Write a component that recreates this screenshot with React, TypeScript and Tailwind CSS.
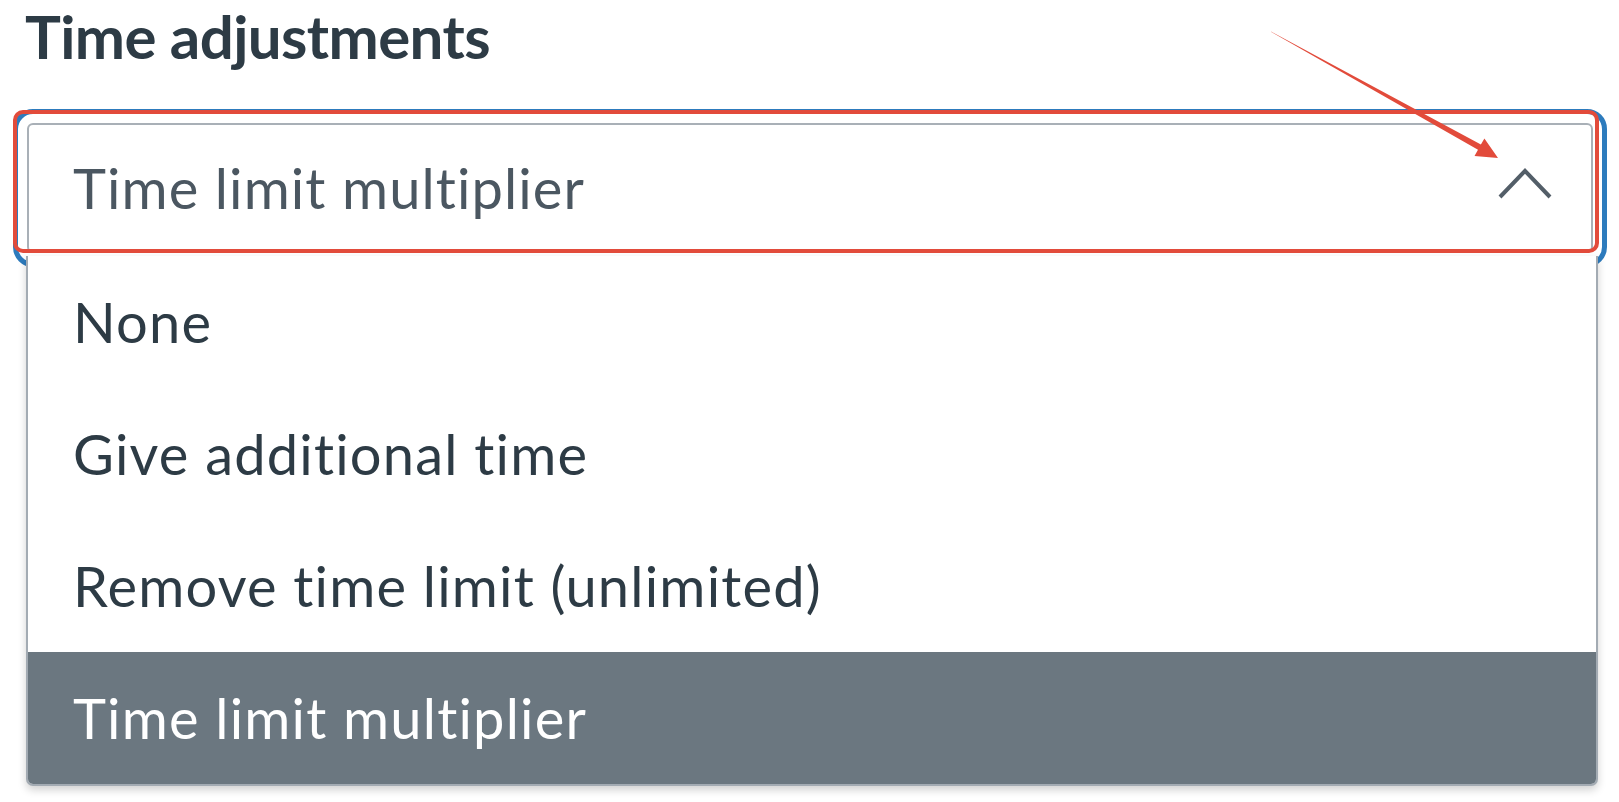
import React from 'react';

const options = [
  'None',
  'Give additional time',
  'Remove time limit (unlimited)',
  'Time limit multiplier',
];

const App: React.FC = () => {
  const selected = 'Time limit multiplier';

  return (
    <div
      className="relative w-[1619px] h-[802px] overflow-hidden bg-white text-[#2d3b45]"
      style={{ fontFamily: 'Lato, "Noto Sans", sans-serif' }}
    >
      {/* Heading */}
      <h2 className="pl-[25px] pt-[6px] text-[60px] font-bold leading-none tracking-[-0.6px]">Time adjustments</h2>

      {/* Select with focus ring */}
      <div className="pl-[27px] pt-[57px]">
        <div className="flex items-center justify-between w-[1566px] h-[130px] border-2 border-[#a9b0b7] rounded-[6px] pl-[44px] pr-[38px] outline-[5px] outline-solid outline-[#2d7bbd] outline-offset-[9px]">
          <span className="text-[56px] leading-none tracking-[1.1px] text-[#4b5761]">{selected}</span>
          <svg width="56" height="34" viewBox="0 0 56 34" fill="none" className="mt-[-10px]">
            <polyline points="3,31 28,5 53,31" stroke="#535e68" strokeWidth="4" strokeLinejoin="miter" />
          </svg>
        </div>
      </div>

      {/* Open listbox */}
      <ul className="absolute left-[26px] top-[256px] w-[1572px] bg-white border-x-2 border-b-2 border-[#a3abb3] rounded-b-[7px] overflow-hidden shadow-[0_4px_8px_rgba(0,0,0,0.18)]">
        {options.map((opt) => (
          <li
            key={opt}
            className={`flex items-center h-[132px] pl-[45px] text-[56px] leading-none tracking-[1.2px] ${
              opt === selected ? 'bg-[#6b7780] text-white' : 'text-[#2d3b45]'
            }`}
          >
            {opt}
          </li>
        ))}
      </ul>

      {/* Annotation: red outline */}
      <div className="absolute left-[13px] top-[110px] w-[1586px] h-[143px] border-[4px] border-[#e24b3b] rounded-[10px] pointer-events-none" />

      {/* Annotation: arrow */}
      <svg className="absolute left-0 top-0 pointer-events-none" width="1619" height="802" viewBox="0 0 1619 802">
        <polygon
          points="1268,30 1480.9,144.6 1484.4,138.5 1498,158 1474.5,155.9 1478,149.8"
          fill="#e24b3b"
        />
      </svg>
    </div>
  );
};

export default App;
